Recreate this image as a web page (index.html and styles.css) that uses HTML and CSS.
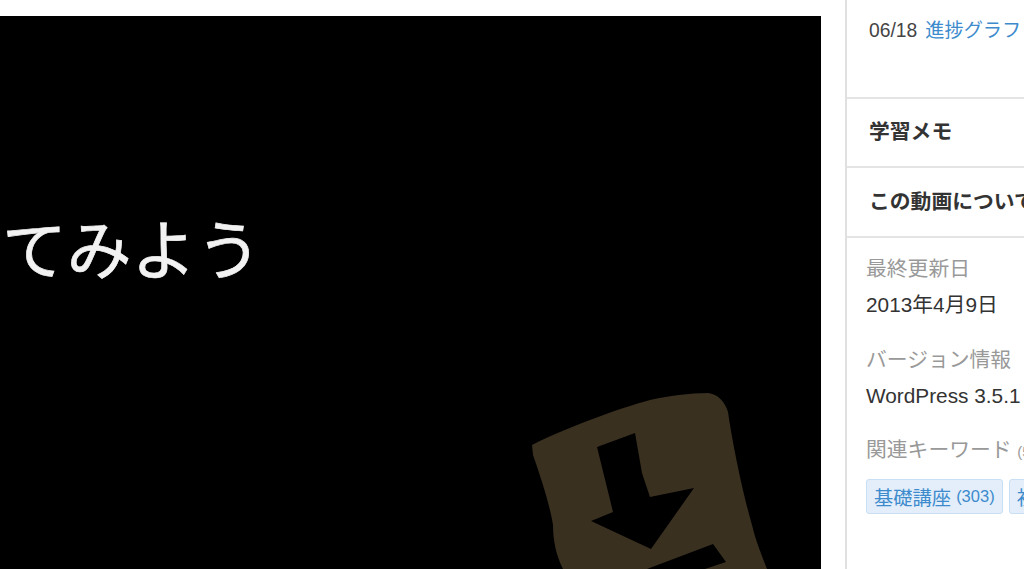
FILE: index.html
```html
<!DOCTYPE html>
<html lang="ja">
<head>
<meta charset="utf-8">
<title>この動画について</title>
<link rel="stylesheet" href="styles.css">
</head>
<body>
<div class="page">
  <main class="stage">
    <div class="video">
      <p class="caption">てみよう</p>
      <svg class="art" viewBox="500 370 321 199" width="321" height="199" aria-hidden="true">
        <path class="art-blob" d="M532 445 C565 428 620 408 650 400 C668 396 690 393 708 393 C718 394 725 402 728 412 C732 440 742 490 752 525 C756 542 762 556 767 569 L563 569 C556 555 553 540 553 525 C550 505 540 475 533 455 Z"/>
        <path class="art-cut" d="M635 433 L597 447 L613 512 L591 521 L651 549 L694 488 L650 497 L642 473 Z"/>
        <path class="art-cut" d="M713 544 L726 562 L705 569 L647 569 Z"/>
      </svg>
    </div>
  </main>
  <aside class="side">
    <section class="block block-top">
      <span class="date">06/18</span>
      <a class="link">進捗グラフ</a>
    </section>
    <section class="block block-row block-memo"><h2 class="row-title">学習メモ</h2></section>
    <section class="block block-row block-about"><h2 class="row-title">この動画について</h2></section>
    <section class="info">
      <h3 class="info-label">最終更新日</h3>
      <p class="info-value">2013年4月9日</p>
      <h3 class="info-label">バージョン情報</h3>
      <p class="info-value">WordPress 3.5.1</p>
      <h3 class="info-label">関連キーワード <span class="count-label">(5)</span></h3>
      <div class="tags">
        <a class="tag">基礎講座 <span class="tag-count">(303)</span></a>
        <a class="tag">初級 <span class="tag-count">(120)</span></a>
      </div>
    </section>
  </aside>
</div>
</body>
</html>
```
FILE: styles.css
```css
* { box-sizing: border-box; }
html, body { margin: 0; height: 100%; background: #fff; overflow: hidden; }
body {
  font-family: "Liberation Sans", "Noto Sans CJK JP", sans-serif;
  color: #333;
}
.page { display: flex; height: 569px; width: 1024px; overflow: hidden; }
.stage { flex: 0 0 821px; padding-top: 16px; }
.video { position: relative; height: 553px; background: #000; overflow: hidden; }
.caption {
  position: absolute;
  left: 2px;
  top: 185px;
  margin: 0;
  font-family: "Noto Sans CJK JP", sans-serif;
  font-size: 64.8px;
  line-height: 90px;
  font-weight: 400;
  color: #f2f2f2;
  white-space: nowrap;
  -webkit-text-stroke: 0.7px #f2f2f2;
  filter: blur(0.7px);
}
.art { position: absolute; left: 500px; top: 354px; filter: blur(0.5px); }
.art-blob { fill: #3a3020; }
.art-cut { fill: #000; }
.side {
  flex: 0 0 179px;
  margin-left: 24px;
  border-left: 2px solid #e0e0e0;
  min-width: 0;
  overflow: hidden;
}
.block { border-bottom: 2px solid #e4e4e4; white-space: nowrap; }
.block-top { height: 99px; padding: 18px 0 0 22px; display: flex; gap: 8px; align-items: flex-start; line-height: 26px; }
.block-row { padding-left: 22px; display: flex; align-items: center; }
.block-memo { height: 69px; padding-bottom: 5px; }
.block-about { height: 70px; padding-bottom: 4px; }
.date { font-size: 19.3px; color: #444; }
.link { font-size: 19.2px; color: #3d8bcd; }
.row-title { margin: 0; font-size: 20.8px; font-weight: 700; color: #333; }
.info { padding: 16px 0 0 19px; white-space: nowrap; }
.info-label { margin: 0; font-size: 20.8px; line-height: 30px; font-weight: 400; color: #999; }
.count-label { font-size: 15px; }
.info-value { margin: 6px 0 24.5px; font-size: 20.8px; line-height: 30px; color: #333; }
.tags { display: flex; gap: 6px; margin-top: 12px; }
.tag {
  flex: none;
  height: 35px;
  padding: 0 7px;
  display: flex;
  align-items: center;
  gap: 5px;
  font-size: 19.3px;
  color: #3d8bcd;
  background: #e3eefa;
  border: 1.5px solid #c8dff4;
  border-radius: 3px;
}
.tag-count { font-size: 16.5px; }
```
